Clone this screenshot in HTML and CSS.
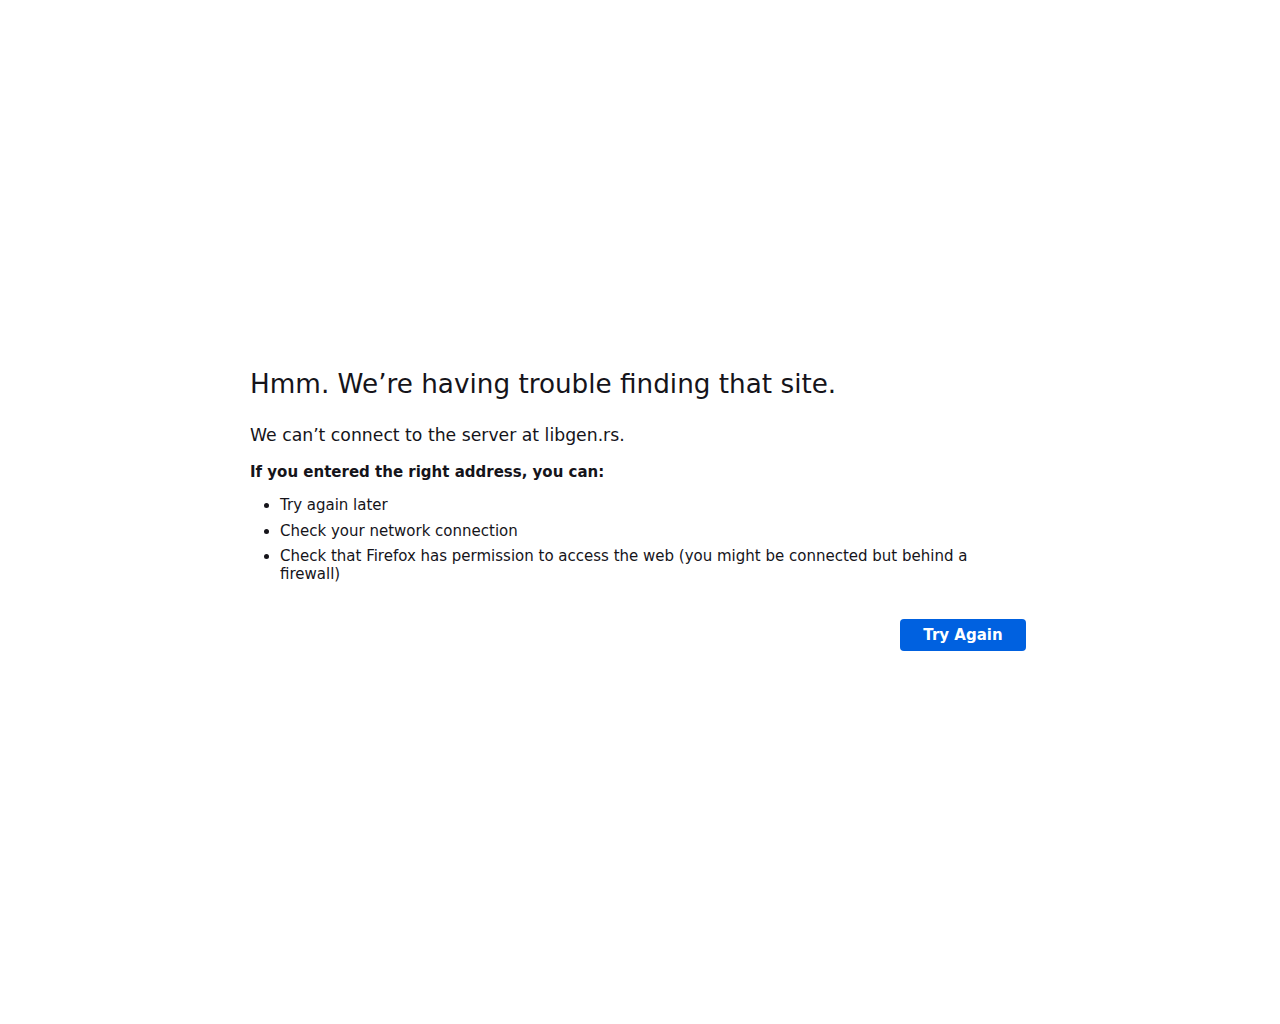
FILE: index.html
```html
<!DOCTYPE html>
<html lang="en">
<head>
    <meta charset="UTF-8">
    <meta name="viewport" content="width=device-width, initial-scale=1.0">
    <title>Server Not Found</title>
    <link rel="stylesheet" href="styles.css">
</head>
<body>
    <div class="container">
        <h1 class="title">Hmm. We’re having trouble finding that site.</h1>
        <p class="desc">We can’t connect to the server at libgen.rs.</p>
        <p class="hint">If you entered the right address, you can:</p>
        <ul class="tips">
            <li>Try again later</li>
            <li>Check your network connection</li>
            <li>Check that Firefox has permission to access the web (you might be connected but behind a firewall)</li>
        </ul>
        <div class="button-container">
            <button id="try-again" class="primary">Try Again</button>
        </div>
    </div>
</body>
</html>
```

FILE: styles.css
```css
body {
    font-family: "DejaVu Sans", sans-serif;
    font-size: 15px;
    color: #15141a;
    background: #fff;
    margin: 0;
    padding: 0;
    display: flex;
    align-items: center;
    justify-content: center;
    min-height: 100vh;
}

.container {
    width: 780px;
    margin-top: -5px;
}

.title {
    font-size: 26.25px;
    font-weight: normal;
    line-height: 32px;
    margin: 0 0 24px;
}

.desc {
    font-size: 17.25px;
    line-height: 22px;
    margin: 0 0 15px;
}

.hint {
    font-weight: bold;
    line-height: 22px;
    margin: 0 0 13px;
}

.tips {
    margin: 0;
    padding-left: 30px;
}

.tips li {
    line-height: 18px;
    margin-bottom: 7.5px;
}

.tips li:last-child {
    margin-bottom: 0;
}

.button-container {
    display: flex;
    justify-content: flex-end;
    margin-top: 36px;
}

button.primary {
    font-family: "DejaVu Sans", sans-serif;
    font-size: 15px;
    font-weight: bold;
    color: #fff;
    background: #0061e0;
    border: none;
    border-radius: 4px;
    width: 126px;
    height: 32px;
    padding: 0;
    margin-right: 4px;
    cursor: pointer;
}

button.primary:hover {
    background: #0250bb;
}
```
